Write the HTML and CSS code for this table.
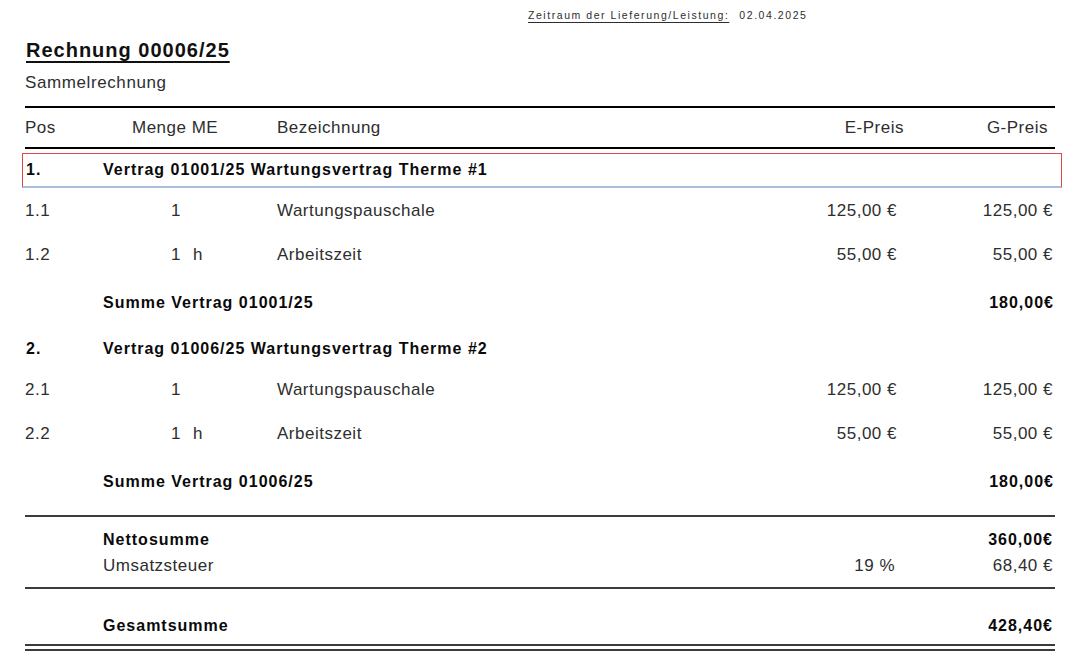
FILE: index.html
```html
<!DOCTYPE html>
<html lang="de">
<head>
<meta charset="utf-8">
<title>Rechnung 00006/25</title>
<link rel="stylesheet" href="styles.css">
</head>
<body>
<div class="page">
  <div class="meta"><span class="meta-label">Zeitraum der Lieferung/Leistung:</span><span class="meta-date">02.04.2025</span></div>
  <h1 class="title">Rechnung 00006/25</h1>
  <div class="subtitle">Sammelrechnung</div>
  <div class="rule-thick rule-top"></div>
  <div class="row head">
    <div class="c-pos">Pos</div>
    <div class="c-menge head-menge">Menge ME</div>
    <div class="c-bez">Bezeichnung</div>
    <div class="c-ep">E-Preis</div>
    <div class="c-gp">G-Preis</div>
  </div>
  <div class="rule-thick rule-bottom"></div>

  <section class="group">
    <div class="row group-head selected">
      <div class="c-pos">1.</div>
      <div class="c-title">Vertrag 01001/25 Wartungsvertrag Therme #1</div>
    </div>
    <div class="row item">
      <div class="c-pos">1.1</div>
      <div class="c-menge"><span class="qty">1</span><span class="unit"></span></div>
      <div class="c-bez">Wartungspauschale</div>
      <div class="c-ep">125,00 €</div>
      <div class="c-gp">125,00 €</div>
    </div>
    <div class="row item">
      <div class="c-pos">1.2</div>
      <div class="c-menge"><span class="qty">1</span><span class="unit">h</span></div>
      <div class="c-bez">Arbeitszeit</div>
      <div class="c-ep">55,00 €</div>
      <div class="c-gp">55,00 €</div>
    </div>
    <div class="row sum">
      <div class="c-title">Summe Vertrag 01001/25</div>
      <div class="c-gp">180,00€</div>
    </div>
  </section>

  <section class="group">
    <div class="row group-head">
      <div class="c-pos">2.</div>
      <div class="c-title">Vertrag 01006/25 Wartungsvertrag Therme #2</div>
    </div>
    <div class="row item">
      <div class="c-pos">2.1</div>
      <div class="c-menge"><span class="qty">1</span><span class="unit"></span></div>
      <div class="c-bez">Wartungspauschale</div>
      <div class="c-ep">125,00 €</div>
      <div class="c-gp">125,00 €</div>
    </div>
    <div class="row item">
      <div class="c-pos">2.2</div>
      <div class="c-menge"><span class="qty">1</span><span class="unit">h</span></div>
      <div class="c-bez">Arbeitszeit</div>
      <div class="c-ep">55,00 €</div>
      <div class="c-gp">55,00 €</div>
    </div>
    <div class="row sum">
      <div class="c-title">Summe Vertrag 01006/25</div>
      <div class="c-gp">180,00€</div>
    </div>
  </section>

  <div class="rule-thin rule-sep"></div>
  <section class="totals">
    <div class="row total strong">
      <div class="c-title">Nettosumme</div>
      <div class="c-gp">360,00€</div>
    </div>
    <div class="row total">
      <div class="c-label">Umsatzsteuer</div>
      <div class="c-ep">19 %</div>
      <div class="c-gp">68,40 €</div>
    </div>
  </section>
  <div class="rule-thin rule-pre-grand"></div>
  <div class="row total strong grand">
    <div class="c-title">Gesamtsumme</div>
    <div class="c-gp">428,40€</div>
  </div>
  <div class="rule-double"></div>
</div>
</body>
</html>
```

FILE: styles.css
```css
* {
  box-sizing: border-box;
}

html,
body {
  margin: 0;
  padding: 0;
  background: #ffffff;
}

body {
  font-family: "Liberation Sans", Arial, sans-serif;
  color: #2e2e2e;
}

.page {
  width: 1087px;
  padding: 0 32px 0 25px;
}

/* top meta line */
.meta {
  height: 30px;
  line-height: 30px;
  padding-left: 503px;
  font-size: 10.5px;
  letter-spacing: 1.55px;
  white-space: nowrap;
  color: #2e2e2e;
}

.meta-label {
  text-decoration: underline;
  text-decoration-thickness: 1px;
  text-underline-offset: 3px;
}

.meta-date {
  margin-left: 10px;
}

/* title */
.title {
  margin: 6px 0 0 1px;
  height: 28px;
  line-height: 28px;
  font-size: 20px;
  font-weight: bold;
  letter-spacing: 1px;
  color: #111111;
  text-decoration: underline;
  text-decoration-thickness: 2px;
  text-underline-offset: 4px;
}

.subtitle {
  margin-top: 9px;
  height: 20px;
  line-height: 20px;
  font-size: 17px;
  letter-spacing: 0.6px;
}

/* rules */
.rule-thick {
  height: 2px;
  background: #000000;
}

.rule-top {
  margin-top: 13px;
}

.rule-bottom {
  margin-bottom: 1px;
}

.rule-thin {
  height: 2px;
  background: #3c3c3c;
}

.rule-sep {
  margin-top: 7px;
}

.rule-pre-grand {
  margin-top: 8px;
}

.rule-double {
  margin-top: 5px;
  height: 7px;
  border-top: 2px solid #3c3c3c;
  border-bottom: 2px solid #3c3c3c;
}

/* table rows */
.row {
  display: grid;
  grid-template-columns: 78px 174px 488px 140px 150px;
  white-space: nowrap;
  font-size: 17px;
  letter-spacing: 0.5px;
}

.c-pos {
  grid-column: 1;
}

.c-menge {
  grid-column: 2;
  display: flex;
}

.c-bez {
  grid-column: 3;
}

.c-ep {
  grid-column: 4;
  text-align: right;
}

.c-gp {
  grid-column: 5;
  text-align: right;
}

.c-title {
  grid-column: 2 / 5;
}

.c-label {
  grid-column: 2 / 4;
}

.head {
  height: 39px;
  line-height: 39px;
}

.head-menge {
  padding-left: 29px;
}

.head .c-ep {
  padding-right: 1px;
}

.head .c-gp {
  padding-right: 7px;
}

.group {
  padding-top: 3px;
}

.group-head,
.sum,
.strong {
  font-size: 16px;
  font-weight: bold;
  letter-spacing: 1px;
  color: #0a0a0a;
}

.group-head {
  margin: 0 -7px 0 -3px;
  padding: 0 6px 0 2px;
  height: 35px;
  line-height: 32px;
  border: 1px solid transparent;
  border-bottom-width: 2px;
}

.group-head .c-pos {
  padding-left: 1px;
}

.group-head .c-title {
  grid-column: 2 / 6;
}

.group-head.selected {
  border-color: #e0464a;
  border-bottom-color: #aabddd;
}

.item {
  height: 44px;
  line-height: 44px;
}

.group-head + .item {
  margin-top: 1px;
}

.qty {
  width: 78px;
  text-align: right;
}

.unit {
  margin-left: 12px;
}

.item .c-ep {
  padding-right: 8px;
}

.item .c-gp {
  padding-right: 2px;
}

.sum {
  height: 52px;
  line-height: 52px;
}

.sum .c-gp,
.strong .c-gp {
  padding-right: 1px;
}

/* totals */
.totals {
  padding-top: 10px;
}

.total {
  height: 26px;
  line-height: 26px;
}

.total .c-ep {
  padding-right: 10px;
}

.total .c-gp {
  padding-right: 2px;
}

.grand {
  margin-top: 24px;
}
```
